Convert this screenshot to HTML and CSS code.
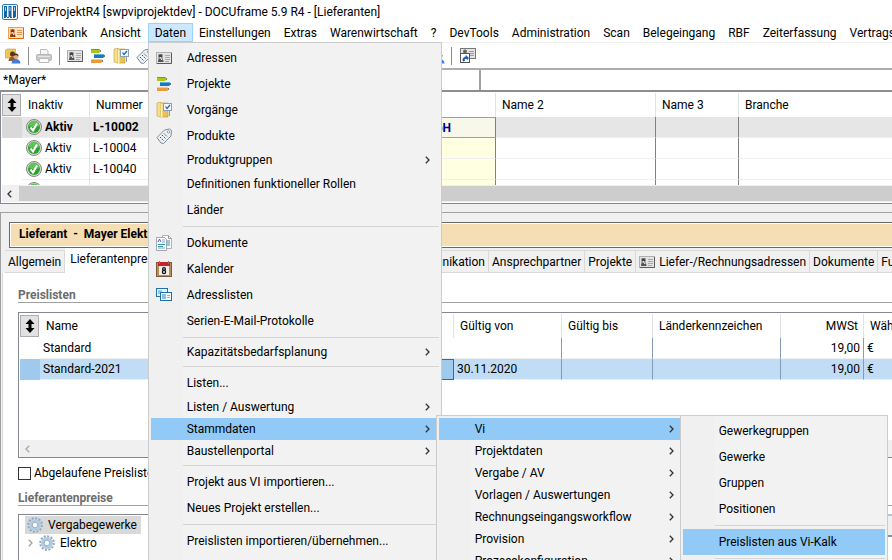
FILE: index.html
```html
<!DOCTYPE html>
<html lang="de">
<head>
    <meta charset="UTF-8">
    <meta name="viewport" content="width=device-width, initial-scale=1.0">
    <title>DOCUframe - Lieferanten</title>
    <link rel="stylesheet" href="styles.css">
</head>
<body>
    <svg class="sprite" aria-hidden="true">
        <symbol id="card" viewBox="0 0 16 12">
            <rect x="0.5" y="0.5" width="15" height="11" fill="#e4e4e4" stroke="#b0b0b0"/>
            <path d="M15.500 1v10.500H1" fill="none" stroke="#5a5a5a"/>
            <rect x="2" y="2" width="5" height="8" fill="#aaa"/>
            <circle cx="4.500" cy="4" r="1.800" fill="#444"/>
            <path d="M2 10c0-5 5.500-5 5.500 0z" fill="#555"/>
            <path d="M4 5l2 3" stroke="#fff"/>
            <path d="M9 3.500h5M9 5.500h5M9 7.500h5M9 9.500h4" stroke="#999" stroke-width="0.800"/>
        </symbol>
        <symbol id="card-orange" viewBox="0 0 16 12">
            <rect x="0.500" y="0.500" width="15" height="11" fill="#ffe2bd" stroke="#f0a050"/>
            <path d="M15.500 1v10.500H1" fill="none" stroke="#d9660c"/>
            <rect x="2" y="2" width="5" height="8" fill="#f0a870"/>
            <circle cx="4.500" cy="4" r="1.800" fill="#7a3a18"/>
            <path d="M2 10c0-5 5.500-5 5.500 0z" fill="#8a3a18"/>
            <path d="M4 5l2 3" stroke="#fff"/>
            <path d="M9 3.500h5M9 5.500h5M9 7.500h5" stroke="#e08030" stroke-width="0.800"/>
        </symbol>
        <symbol id="bars" viewBox="0 0 16 16">
            <path d="M1 1h8l2 2-2 2H1z" fill="#a9c713"/>
            <path d="M1 1h8l1 1H1z" fill="#7d9a12"/>
            <path d="M4 6h9l2 2-2 2H4z" fill="#1878c0"/>
            <path d="M4 6h9l1 1H4z" fill="#5cb0e0"/>
            <path d="M1 11h10l2 2-2 2H1z" fill="#e89a3c"/>
            <path d="M1 11h10l1 1H1z" fill="#f5c98c"/>
            <path d="M10 3h1M14 8h1M12 13h1" stroke="#333"/>
        </symbol>
        <symbol id="folder" viewBox="0 0 16 16">
            <path d="M1 1l4-1v15l-4-1z" fill="#f5df8a" stroke="#c9a33a" stroke-width="0.600"/>
            <path d="M4.500 1H12v14H4.500z" fill="#e7c255" stroke="#b8902a" stroke-width="0.600"/>
            <path d="M4.500 1l2 1v14l-2-1z" fill="#fff0b0"/>
            <rect x="7.500" y="1.500" width="8" height="7" fill="#f4f8fc" stroke="#8aa0b8"/>
            <path d="M9.500 4.500l1.500 2 3-3.500" fill="none" stroke="#1d62b0" stroke-width="1.200"/>
            <path d="M13.500 9v5" stroke="#8aa0b8"/>
        </symbol>
        <symbol id="tag" viewBox="0 0 16 16">
            <path d="M1 9.500L8.500 2l5-1 2 1.500-0.500 5.500-7.500 7.500-2.500-0.500z" fill="#edf1f5" stroke="#7d8b99"/>
            <circle cx="12.500" cy="4" r="1.200" fill="#fff" stroke="#7d8b99" stroke-width="0.800"/>
            <path d="M4 9l4 4M6 7l4 4M8 5.500l3.500 3.500" stroke="#44505c" stroke-dasharray="1.500 1"/>
        </symbol>
        <symbol id="docs" viewBox="0 0 16 16">
            <path d="M6.500 0.500h6l3 3v10h-9z" fill="#fafafa" stroke="#b0b4b8"/>
            <path d="M12.500 0.500v3h3" fill="none" stroke="#999"/>
            <path d="M11 6h3M11 8h3M11 10h3" stroke="#2f9ab0"/>
            <path d="M0.500 2.500h8l2 2v11h-10z" fill="#fff" stroke="#a4a8ac"/>
            <path d="M2 7l1.500-3L5 7" fill="none" stroke="#5a58c8"/>
            <path d="M6 5h3M6 7h3M2 13h7" stroke="#7ea7d8"/>
            <path d="M2 9.500h7M2 11.500h5" stroke="#2f9ab0"/>
        </symbol>
        <symbol id="calendar" viewBox="0 0 16 16">
            <rect x="0.500" y="1.500" width="15" height="14" fill="#b98d5a" stroke="#7d5a34"/>
            <rect x="3" y="4" width="10" height="10" fill="#f2efea"/>
            <rect x="2" y="1" width="12" height="4" fill="#c8232c"/>
            <path d="M3.500 0v3M12.500 0v3" stroke="#777"/>
            <circle cx="8" cy="8" r="1.400" fill="none" stroke="#111" stroke-width="1.300"/>
            <circle cx="8" cy="11" r="1.600" fill="none" stroke="#111" stroke-width="1.300"/>
        </symbol>
        <symbol id="cards" viewBox="0 0 16 14">
            <rect x="0.500" y="0.500" width="11" height="8" fill="#e8f3fb" stroke="#1f6fa8"/>
            <path d="M2 3h4M2 5h3" stroke="#4f9fd0"/>
            <rect x="4.500" y="4.500" width="11" height="8" fill="#f2f8fc" stroke="#1f6fa8"/>
            <rect x="6" y="6" width="4" height="5" fill="#8abfe0"/>
            <path d="M11 7.500h3M11 9.500h3" stroke="#7fb7da"/>
        </symbol>
        <symbol id="people" viewBox="0 0 16 16">
            <path d="M0.500 2l2-1h8v9h-10z" fill="#edc65a" stroke="#c99c34" stroke-width="0.600"/>
            <circle cx="7.500" cy="6" r="2.500" fill="#5b3420"/>
            <path d="M3.500 13c0-6 8-6 8 0z" fill="#8c5b34"/>
            <circle cx="11" cy="8.500" r="2.500" fill="#e8a878"/>
            <path d="M8.500 8c0-3.500 5-3.500 5 0l-2.500-1z" fill="#40261a"/>
            <path d="M6.500 15.500c0-6 9-6 9 0z" fill="#3e7ee0"/>
        </symbol>
        <symbol id="printer" viewBox="0 0 16 16">
            <path d="M4.500 6V1.500h6l1.500 1.500v3" fill="#f4f4f4" stroke="#bbb"/>
            <rect x="0.500" y="6.500" width="15" height="6" rx="1" fill="#c8c8c8" stroke="#b4b4b4"/>
            <path d="M2 8.500h12" stroke="#e6e6e6"/>
            <path d="M3.500 10.500h9l0.500 4h-10z" fill="#fafafa" stroke="#bbb"/>
        </symbol>
        <symbol id="shortcut" viewBox="0 0 16 16">
            <rect x="0.500" y="0.500" width="15" height="10" fill="#e4e4e4" stroke="#777"/>
            <circle cx="5" cy="3.500" r="2" fill="#666"/>
            <path d="M9 3.500h5M9 5.500h5M10 7.500h4" stroke="#999"/>
            <rect x="0.500" y="5.500" width="9" height="9" fill="#fff" stroke="#555"/>
            <path d="M3 13c-0.500-3 1-4 3-4V7.500l2.500 2.500-1 1.500-1.500-1c-1.500 0-2 1-1.500 2.500z" fill="#1550b0" stroke="#1550b0" stroke-width="0.600"/>
        </symbol>
        <symbol id="check" viewBox="0 0 16 16">
            <circle cx="8" cy="8" r="7.500" fill="#dcdcdc" stroke="#858585"/>
            <circle cx="8" cy="8" r="6" fill="#2fa02c"/>
            <path d="M2.500 7a5.500 5.500 0 0 1 11 0c-3 1.500-7 1.500-11 0z" fill="#62c25a"/>
            <path d="M4.500 8.500l2.500 3 4-7" fill="none" stroke="#fff" stroke-width="2"/>
        </symbol>
        <symbol id="gear" viewBox="0 0 16 16">
            <circle cx="8" cy="8" r="6.800" fill="none" stroke="#8ea9c2" stroke-width="2" stroke-dasharray="2.100 1.460"/>
            <circle cx="8" cy="8" r="4.500" fill="#fff" stroke="#b3cbe0" stroke-width="3"/>
            <circle cx="8" cy="8" r="2.800" fill="#fff" stroke="#7f9bb5" stroke-width="0.800"/>
        </symbol>
        <symbol id="sort" viewBox="0 0 10 14">
            <path d="M5 0l4.500 5H6.500v4h3L5 14 0.500 9h3V5h-3z" fill="#000"/>
        </symbol>
        <symbol id="chevron" viewBox="0 0 5 8">
            <path d="M0.800 0.800L4 4 0.800 7.200" fill="none" stroke="currentColor" stroke-width="1.300"/>
        </symbol>
        <symbol id="app" viewBox="0 0 16 16">
            <rect x="0.500" y="0.500" width="15" height="15" rx="1.500" fill="#fff" stroke="#2a7ab5"/>
            <path d="M3.500 2v11M8 2v11M12.500 2v11" stroke="#1565a5" stroke-width="3"/>
            <path d="M3.500 3v4M8 3v4M12.500 3v4" stroke="#a8d4ee"/>
            <path d="M2 13.500h12" stroke="#1565a5" stroke-dasharray="2 1"/>
        </symbol>
    </svg>

    <header class="titlebar">
        <svg class="icon"><use href="#app"/></svg>
        <span>DFViProjektR4 [swpviprojektdev] - DOCUframe 5.9 R4 - [Lieferanten]</span>
    </header>

    <nav class="menubar">
        <svg class="icon icon-flat"><use href="#card-orange"/></svg>
        <button>Datenbank</button>
        <button>Ansicht</button>
        <div class="dropdown">
            <button class="open">Daten</button>
            <ul class="menu">
                <li><button class="item"><svg class="icon"><use href="#card"/></svg>Adressen</button></li>
                <li><button class="item"><svg class="icon"><use href="#bars"/></svg>Projekte</button></li>
                <li><button class="item"><svg class="icon"><use href="#folder"/></svg>Vorgänge</button></li>
                <li><button class="item"><svg class="icon"><use href="#tag"/></svg>Produkte</button></li>
                <li><button class="item sub">Produktgruppen<svg class="chevron"><use href="#chevron"/></svg></button></li>
                <li><button class="item">Definitionen funktioneller Rollen</button></li>
                <li><button class="item">Länder</button></li>
                <li class="separator"></li>
                <li><button class="item"><svg class="icon"><use href="#docs"/></svg>Dokumente</button></li>
                <li><button class="item"><svg class="icon"><use href="#calendar"/></svg>Kalender</button></li>
                <li><button class="item"><svg class="icon"><use href="#cards"/></svg>Adresslisten</button></li>
                <li><button class="item">Serien-E-Mail-Protokolle</button></li>
                <li class="separator"></li>
                <li><button class="item sub">Kapazitätsbedarfsplanung<svg class="chevron"><use href="#chevron"/></svg></button></li>
                <li class="separator"></li>
                <li><button class="item">Listen...</button></li>
                <li><button class="item sub">Listen / Auswertung<svg class="chevron"><use href="#chevron"/></svg></button></li>
                <li>
                    <button class="item sub active">Stammdaten<svg class="chevron"><use href="#chevron"/></svg></button>
                    <ul class="menu submenu">
                        <li>
                            <button class="item sub active">Vi<svg class="chevron"><use href="#chevron"/></svg></button>
                            <ul class="menu submenu submenu-vi">
                                <li><button class="item">Gewerkegruppen</button></li>
                                <li><button class="item">Gewerke</button></li>
                                <li><button class="item">Gruppen</button></li>
                                <li><button class="item">Positionen</button></li>
                                <li class="separator"></li>
                                <li><button class="item active">Preislisten aus Vi-Kalk</button></li>
                                <li class="separator"></li>
                            </ul>
                        </li>
                        <li><button class="item sub">Projektdaten<svg class="chevron"><use href="#chevron"/></svg></button></li>
                        <li><button class="item sub">Vergabe / AV<svg class="chevron"><use href="#chevron"/></svg></button></li>
                        <li><button class="item sub">Vorlagen / Auswertungen<svg class="chevron"><use href="#chevron"/></svg></button></li>
                        <li><button class="item sub">Rechnungseingangsworkflow<svg class="chevron"><use href="#chevron"/></svg></button></li>
                        <li><button class="item sub">Provision<svg class="chevron"><use href="#chevron"/></svg></button></li>
                        <li><button class="item sub">Prozesskonfiguration<svg class="chevron"><use href="#chevron"/></svg></button></li>
                    </ul>
                </li>
                <li><button class="item sub">Baustellenportal<svg class="chevron"><use href="#chevron"/></svg></button></li>
                <li class="separator"></li>
                <li><button class="item">Projekt aus VI importieren...</button></li>
                <li><button class="item">Neues Projekt erstellen...</button></li>
                <li class="separator"></li>
                <li><button class="item">Preislisten importieren/übernehmen...</button></li>
            </ul>
        </div>
        <button>Einstellungen</button>
        <button>Extras</button>
        <button>Warenwirtschaft</button>
        <button>?</button>
        <button>DevTools</button>
        <button>Administration</button>
        <button>Scan</button>
        <button>Belegeingang</button>
        <button>RBF</button>
        <button>Zeiterfassung</button>
        <button>Vertragsprüfung</button>
    </nav>

    <div class="toolbar">
        <div class="tools tools-main">
            <button aria-label="Adressmappe"><svg class="icon"><use href="#people"/></svg></button>
            <span class="divider"></span>
            <button aria-label="Drucken"><svg class="icon"><use href="#printer"/></svg></button>
            <span class="divider"></span>
            <button aria-label="Adressen"><svg class="icon"><use href="#card"/></svg></button>
            <button aria-label="Projekte"><svg class="icon"><use href="#bars"/></svg></button>
            <button aria-label="Vorgänge"><svg class="icon"><use href="#folder"/></svg></button>
            <button aria-label="Produkte"><svg class="icon"><use href="#tag"/></svg></button>
            <button class="last" aria-label="Mitarbeiter"><svg class="icon"><use href="#people"/></svg></button>
        </div>
        <div class="tools">
            <span class="divider"></span>
            <button aria-label="Verknüpfung"><svg class="icon"><use href="#shortcut"/></svg></button>
        </div>
    </div>

    <div class="filter">
        <input class="filter-name" type="text" value="*Mayer*" aria-label="Suche">
        <input class="filter-more" type="text" aria-label="Weitere Suche">
    </div>

    <section class="grid suppliers">
        <div class="rows">
            <table>
                <colgroup>
                    <col class="c-handle"><col class="c-state"><col class="c-number"><col class="c-name"><col class="c-name2"><col class="c-name3"><col>
                </colgroup>
                <thead>
                    <tr><th class="corner"><button aria-label="Sortieren"><svg><use href="#sort"/></svg></button></th><th>Inaktiv</th><th>Nummer</th><th></th><th>Name 2</th><th>Name 3</th><th>Branche</th></tr>
                </thead>
                <tbody>
                    <tr class="selected"><td></td><td class="state"><svg class="icon"><use href="#check"/></svg>Aktiv</td><td>L-10002</td><td class="name">Mayer Elektro GmbH</td><td></td><td></td><td></td></tr>
                    <tr><td></td><td class="state"><svg class="icon"><use href="#check"/></svg>Aktiv</td><td>L-10004</td><td class="name"></td><td></td><td></td><td></td></tr>
                    <tr><td></td><td class="state"><svg class="icon"><use href="#check"/></svg>Aktiv</td><td>L-10040</td><td class="name"></td><td></td><td></td><td></td></tr>
                    <tr><td></td><td class="state"><svg class="icon"><use href="#check"/></svg></td><td></td><td class="name"></td><td></td><td></td><td></td></tr>
                </tbody>
            </table>
        </div>
        <div class="scrollbar"><svg class="chevron back"><use href="#chevron"/></svg><span class="thumb"></span></div>
    </section>

    <main class="detail">
        <h1>Lieferant&nbsp; -&nbsp; Mayer Elektro</h1>
        <div class="tabs" role="tablist">
            <div class="tabs-start">
                <button role="tab">Allgemein</button>
                <button role="tab" class="current">Lieferantenpreise</button>
                <button role="tab" class="push">Kommunikation</button>
            </div>
            <button role="tab">Ansprechpartner</button>
            <button role="tab">Projekte</button>
            <button role="tab"><svg class="icon icon-flat"><use href="#card"/></svg>Liefer-/Rechnungsadressen</button>
            <button role="tab">Dokumente</button>
            <button role="tab">Funktionen</button>
        </div>
        <div class="page">
            <h2>Preislisten</h2>
            <section class="grid prices">
                <div class="rows">
                    <table>
                        <colgroup>
                            <col class="c-handle"><col class="c-list"><col class="c-kind"><col class="c-from"><col class="c-to"><col class="c-country"><col class="c-tax"><col>
                        </colgroup>
                        <thead>
                            <tr><th class="corner"><button aria-label="Sortieren"><svg><use href="#sort"/></svg></button></th><th>Name</th><th></th><th>Gültig von</th><th>Gültig bis</th><th>Länderkennzeichen</th><th class="number">MWSt</th><th>Währung</th></tr>
                        </thead>
                        <tbody>
                            <tr><td></td><td>Standard</td><td></td><td></td><td></td><td></td><td class="number">19,00</td><td>€</td></tr>
                            <tr class="selected"><td></td><td>Standard-2021</td><td class="focus"></td><td>30.11.2020</td><td></td><td></td><td class="number">19,00</td><td>€</td></tr>
                        </tbody>
                    </table>
                </div>
                <div class="scrollbar"><svg class="chevron back"><use href="#chevron"/></svg></div>
            </section>
            <label class="expired"><input type="checkbox">Abgelaufene Preislisten anzeigen</label>
            <h2>Lieferantenpreise</h2>
            <div class="lower">
                <ul class="tree">
                    <li><span class="node chosen"><svg class="icon"><use href="#gear"/></svg>Vergabegewerke</span></li>
                    <li class="child"><svg class="chevron"><use href="#chevron"/></svg><span class="node"><svg class="icon"><use href="#gear"/></svg>Elektro</span></li>
                </ul>
                <div class="preview"><div class="preview-head"></div></div>
            </div>
        </div>
    </main>
</body>
</html>
```
FILE: styles.css
```css
* {
    box-sizing: border-box;
}

body {
    display: flex;
    flex-direction: column;
    height: 100vh;
    margin: 0;
    overflow: hidden;
    background: #f0f0f0;
    color: #000;
    font: 12px/16px Roboto, "Open Sans", sans-serif;
}

button, input {
    margin: 0;
    padding: 0;
    border: 0;
    background: none;
    color: inherit;
    font: inherit;
}

ul {
    margin: 0;
    padding: 0;
    list-style: none;
}

.sprite {
    position: absolute;
    width: 0;
    height: 0;
}

.icon {
    flex: none;
    width: 16px;
    height: 16px;
}

.icon-flat {
    height: 12px;
}

.chevron {
    flex: none;
    width: 5px;
    height: 8px;
    color: #333;
}

.chevron.back {
    transform: scaleX(-1);
}

/* title and menu bar */

.titlebar {
    display: flex;
    flex: none;
    align-items: center;
    gap: 5px;
    height: 23px;
    padding-left: 2px;
    background: #fff;
}

.menubar {
    display: flex;
    flex: none;
    align-items: center;
    height: 20px;
    padding-left: 8px;
    border-bottom: 1px solid #f0f0f0;
    background: #fff;
    white-space: nowrap;
}

.menubar > button, .dropdown > button {
    flex: none;
    height: 19px;
    padding: 0 7px 0 6px;
}

.dropdown {
    position: relative;
    flex: none;
}

.dropdown > .open {
    border: 1px solid #99d1ff;
    padding: 0 6px;
    background: #cce8ff;
}

.menu {
    position: absolute;
    z-index: 10;
    top: 100%;
    left: 0;
    width: 294px;
    padding: 2px;
    padding-bottom: 20px;
    border: 1px solid #ccc;
    background: linear-gradient(90deg, #f0f0f0 34px, #f2f2f2 34px);
}

.menu li {
    position: relative;
}

.item {
    display: flex;
    align-items: center;
    width: 100%;
    height: 26px;
    padding: 0 9px 0 36px;
    text-align: left;
}

.item.sub {
    height: 22px;
}

.item .icon {
    margin-left: -31px;
    margin-right: 15px;
}

.item .chevron {
    margin-left: auto;
}

.item.active, .item:hover {
    background: #91c9f7;
}

.separator {
    height: 7px;
    padding: 3px 0 3px 32px;
}

.separator::before {
    content: "";
    display: block;
    height: 1px;
    background: #d4d4d4;
}

.submenu {
    top: -3px;
    left: calc(100% - 3px);
    width: 250px;
}

.submenu-vi {
    width: 208px;
}

/* toolbar and filter */

.toolbar {
    display: flex;
    flex: none;
    align-items: center;
    height: 25px;
    background: #fff;
}

.tools {
    display: flex;
    align-items: center;
    gap: 8px;
}

.tools-main {
    gap: 7px;
    width: 451px;
    padding: 0 6px 0 5px;
}

.tools button {
    display: flex;
}

.tools .last {
    margin-left: auto;
}

.divider {
    width: 1px;
    height: 18px;
    background: #8c8c8c;
}

.filter {
    display: flex;
    flex: none;
    height: 24px;
    border-top: 2px solid #adadad;
    border-bottom: 2px solid #8c8e94;
}

.filter input {
    padding: 0 3px;
    background: #fff;
}

.filter-name {
    width: 481px;
    border-right: 2px solid #a0a0a0;
}

.filter-more {
    flex: 1;
    min-width: 0;
}

/* data grids */

.grid {
    display: flex;
    flex: none;
    flex-direction: column;
    border: 1px solid #828790;
    background: #fff;
}

.rows {
    overflow: hidden;
}

.grid table {
    width: 100%;
    border-collapse: separate;
    border-spacing: 0;
    table-layout: fixed;
}

.grid th {
    height: 24px;
    padding: 0 6px;
    border-right: 1px solid #e2e2e2;
    font-weight: normal;
    text-align: left;
    white-space: nowrap;
}

.grid td {
    height: 21px;
    padding: 0 3px;
    border-bottom: 1px solid #efefef;
    white-space: nowrap;
}

.grid th:last-child, .grid th.corner {
    border-right: 0;
}

.grid td:first-child {
    border-bottom: 0;
}

.grid .corner {
    padding: 0;
}

.corner button {
    display: flex;
    align-items: center;
    justify-content: center;
    width: 19px;
    height: 22px;
    border: 1px solid #adadad;
    background: #e1e1e1;
}

.corner svg {
    width: 10px;
    height: 14px;
}

.c-handle {
    width: 20px;
}

.c-state {
    width: 68px;
}

.c-number {
    width: 76px;
}

.c-name {
    width: 330px;
}

.c-name2 {
    width: 160px;
}

.c-name3 {
    width: 83px;
}

.suppliers {
    height: 112px;
    padding: 1px 0 1px 1px;
    border-top: 0;
    border-right: 0;
}

.suppliers .rows {
    height: 92px;
}

.suppliers td:nth-child(n+4):not(:last-child) {
    border-right: 1px solid #808080;
}

.suppliers td:nth-child(2) {
    border-right: 1px solid #e2e2e2;
}

.state .icon {
    margin: 0 3px 0 1px;
    vertical-align: middle;
}

.suppliers .name {
    padding-right: 44px;
    background: #ffffe1;
    color: #00008b;
    text-align: right;
}

.suppliers .selected td {
    background: #e6e6e6;
    font-weight: bold;
}

.suppliers .selected td:first-child {
    background: #d9d9d9;
}

.suppliers .selected .name {
    border: 1px solid #a0a0a0;
    border-right: 2px solid #808080;
    background: #f8f8ea;
}

.scrollbar {
    display: flex;
    align-items: center;
    gap: 7px;
    height: 17px;
    padding: 1px 0 1px 5px;
    background: #f0f0f0;
}

.thumb {
    flex: 1;
    height: 15px;
    background: #cdcdcd;
}

/* detail area */

.detail {
    display: flex;
    flex: 1;
    flex-direction: column;
    min-height: 0;
    margin-top: 8px;
    padding-top: 9px;
    border-top: 1px solid #a0a0a0;
    border-left: 1px solid #a0a0a0;
}

h1 {
    flex: none;
    height: 26px;
    margin: 0 0 0 8px;
    padding: 3px 9px;
    border: 1px solid #696969;
    border-right: 0;
    background: #f5deb3;
    box-shadow: inset 1px 1px #fff, inset 0 -1px #fff;
    font-size: 12px;
    line-height: 16px;
}

.tabs {
    display: flex;
    flex: none;
    height: 25px;
    padding-left: 4px;
    white-space: nowrap;
}

.tabs button {
    display: flex;
    flex: none;
    align-items: center;
    gap: 4px;
    height: 23px;
    margin-top: 2px;
    padding: 0 3px;
    border: 1px solid #d9d9d9;
    border-left: 0;
}

.tabs .current {
    height: 25px;
    margin-top: 0;
    padding: 0 5px 4px;
    border: 0;
    background: #fff;
}

.tabs-start {
    display: flex;
    flex: none;
    width: 484px;
}

.tabs-start .push {
    margin-left: auto;
}

.page {
    display: flex;
    flex: 1;
    flex-direction: column;
    margin-left: 1px;
    padding: 14px 0 0 15px;
    border-left: 1px solid #dcdcdc;
    background: #fff;
}

h2 {
    flex: none;
    height: 16px;
    margin: 0;
    border-bottom: 1px solid #a0a0a0;
    color: #6d6d6d;
    font-size: 12px;
    line-height: 16px;
}

.prices {
    height: 146px;
    margin-top: 9px;
    padding: 1px 0 0 1px;
    border-right: 0;
}

.prices .rows {
    flex: 1;
}

.prices td:nth-child(n+4):not(:last-child) {
    border-right: 1px solid #7f9db9;
}

.prices .number {
    padding-right: 5px;
    text-align: right;
}

.prices td.number {
    padding-right: 3px;
}

.prices .selected td {
    background: #c0ddf5;
}

.prices .selected td:first-child {
    background: #9fcaee;
}

.prices .selected .focus {
    border: 1px solid #0078d7;
    background: #9fcaee;
}

.prices .chevron {
    color: #a8a8a8;
}

.c-list {
    width: 300px;
}

.c-kind {
    width: 114px;
}

.c-from {
    width: 108px;
}

.c-to {
    width: 91px;
}

.c-country {
    width: 128px;
}

.c-tax {
    width: 83px;
}

.expired {
    display: flex;
    flex: none;
    align-items: center;
    gap: 3px;
    margin: 7px 0 9px;
}

.expired input {
    appearance: none;
    width: 13px;
    height: 13px;
    border: 1px solid #333;
    background: #fff;
}

.lower {
    display: flex;
    flex: 1;
    gap: 4px;
    margin-top: 8px;
}

.tree {
    flex: none;
    width: 480px;
    padding: 1px 6px;
    border: 1px solid #828790;
    border-bottom: 0;
}

.tree li {
    display: flex;
    align-items: center;
}

.tree .child {
    gap: 4px;
    padding-left: 3px;
}

.tree .chevron {
    color: #a0a0a0;
}

.node {
    display: flex;
    align-items: center;
    gap: 5px;
    height: 18px;
    padding: 0 4px 0 2px;
}

.chosen {
    background: #d9d9d9;
}

.preview {
    flex: 1;
    border-top: 2px solid #b4c3dc;
}

.preview-head {
    height: 21px;
    border-bottom: 2px solid #8290aa;
    background: #f0f0f0;
}
```
